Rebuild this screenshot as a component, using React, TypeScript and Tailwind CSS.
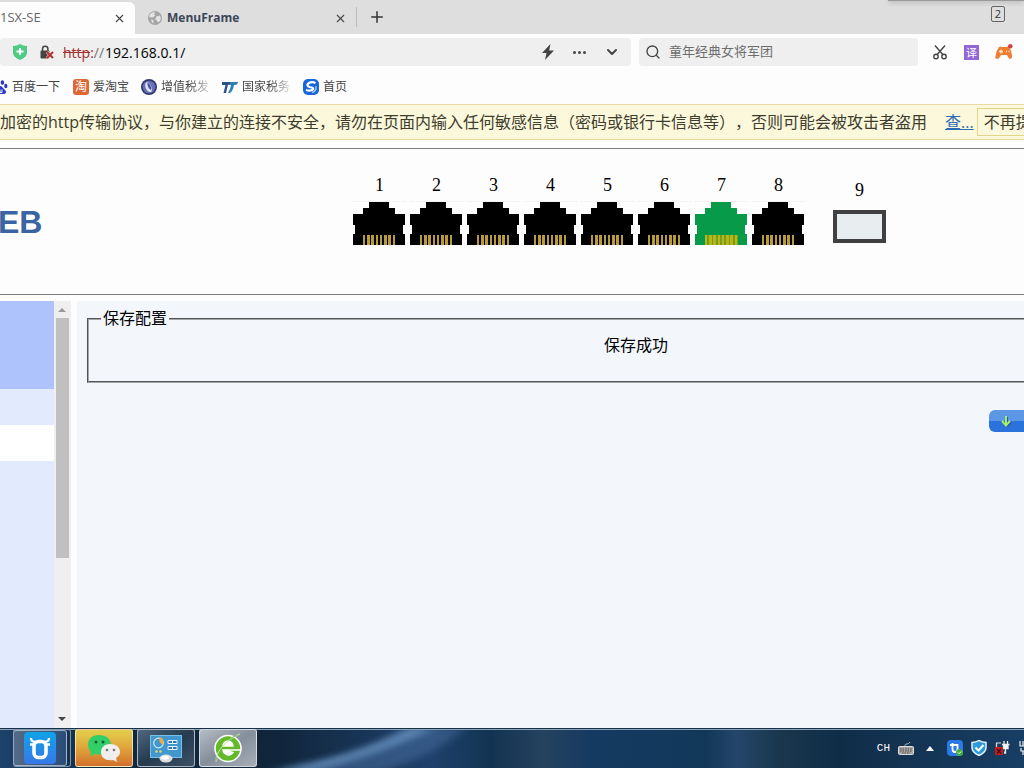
import React from 'react';
import { Scissors, Search, ChevronDown, Plus, X } from 'lucide-react';

const uiFont   = "font-['Open_Sans','Noto_Sans_CJK_SC',sans-serif]";
const pageFont = "font-['Liberation_Serif','Noto_Sans_CJK_SC',serif]";

const PORTS = [
  { id: 1, up: false },
  { id: 2, up: false },
  { id: 3, up: false },
  { id: 4, up: false },
  { id: 5, up: false },
  { id: 6, up: false },
  { id: 7, up: true },
  { id: 8, up: false },
];

// [x, width] of each contact
const PINS = [[10, 2], [14, 3], [18, 3], [23, 2], [27, 2], [31, 3], [35, 3], [40, 2]];

/* ---------- icons ---------- */

const GlobeIcon = () => (
  <svg className="w-[14px] h-[14px] shrink-0" viewBox="0 0 14 14">
    <circle cx="7" cy="7" r="7" fill="#a5a5a5" />
    <path d="M2 3.2 4.5 1.2 7.2 1.6 6.2 3.4 7.4 4.6 5.2 6.2 3 6.4 1 5.4zM8.5 5.4 11.6 4.6 12.8 6.4 12.4 9.4 10.2 11.6 8.6 9.4 7.2 8.4zM3 8.4 5.6 9.2 5.4 12.4 3.8 11z" fill="#e2e2e2" />
  </svg>
);

const ShieldPlus = () => (
  <svg className="w-[14px] h-[16px] shrink-0" viewBox="0 0 14 16">
    <path d="M0 2Q4 2 7 0q3 2 7 2v7q0 4-7 7Q0 13 0 9z" fill="#4fcb83" />
    <path d="M7 4v7M3.500 7.500h7" stroke="#fff" strokeWidth="2" />
  </svg>
);

const LockBroken = () => (
  <svg className="w-[14px] h-[14px] shrink-0" viewBox="0 0 14 14">
    <path d="M2.500 6V4a2.700 2.700 0 0 1 5.400 0v2" fill="none" stroke="#444" strokeWidth="1.500" />
    <rect x="0.500" y="5.500" width="9" height="8" rx="1" fill="#444" />
    <path d="m7 7 6 6m0-6-6 6" stroke="#efefef" strokeWidth="3" />
    <path d="m7 7 6 6m0-6-6 6" stroke="#b5302c" strokeWidth="2" />
  </svg>
);

const BoltIcon = () => (
  <svg className="w-[14px] h-[16px]" viewBox="0 0 14 16">
    <path d="M9.500 0 1 9h4.500L4 16l9-9.500H8.200z" fill="#444" />
  </svg>
);

const GamepadIcon = () => (
  <svg className="w-[18px] h-[16px]" viewBox="0 0 18 16">
    <path d="M4 3q2-1 3 0h4q2-1 3 0 3 4 3 9 0 3-2 3-1 0-3-4H6q-2 4-4 4t-1.500-3Q1 7 4 3z" fill="#ef7d33" />
    <path d="M6 5.500v4M4 7.500h4M11 7.500h1M13.500 7.500h1" stroke="#ffe9c9" strokeWidth="1.300" />
    <circle cx="15.300" cy="2.300" r="2.300" fill="#db4046" />
  </svg>
);

const PawIcon = () => (
  <svg className="w-[8px] h-[16px] shrink-0" viewBox="8 0 8 16" fill="#2a35c9">
    <ellipse cx="10.400" cy="3.600" rx="1.700" ry="2.300" />
    <ellipse cx="13.800" cy="7" rx="1.600" ry="2.200" />
    <path d="M8 7q2 0 3 2l2.500 2.500q1.500 3-1.500 3.500H8z" />
    <path d="M8 10.500v3h2v-3" stroke="#fff" strokeWidth="1" fill="none" />
  </svg>
);

const TaoIcon = () => (
  <span className="flex w-[16px] h-[16px] shrink-0 items-center justify-center rounded-[3px] bg-[#de6736] text-[12px] leading-[14px] text-white">
    淘
  </span>
);

const TaxBallIcon = () => (
  <svg className="w-[16px] h-[16px] shrink-0" viewBox="0 0 16 16">
    <circle cx="8" cy="8" r="8" fill="#30386f" />
    <circle cx="8" cy="8" r="6.300" fill="#6871b4" />
    <ellipse cx="7.500" cy="8" rx="2.800" ry="5.200" fill="#dfe3f6" transform="rotate(-25 8 8)" />
    <ellipse cx="8.600" cy="7.600" rx="1.300" ry="3.600" fill="#4b559c" transform="rotate(-25 8 8)" />
  </svg>
);

const TaxIcon = () => (
  <svg className="w-[16px] h-[12px] shrink-0" viewBox="0 0 16 12">
    <path d="M0 1h9L8 3.800H6L4 12H1.500l2-8H0z" fill="#2c4f8c" />
    <path d="M8.500 1H16q-.5 3-3 3h-1q-1 6-4 8H6q2.500-4 3-8H7.500z" fill="#2c7fb4" />
  </svg>
);

const SogouIcon = () => (
  <svg className="w-[16px] h-[16px] shrink-0" viewBox="0 0 16 16">
    <rect width="16" height="16" rx="5" fill="#1867d8" />
    <path d="M12.500 4Q9 2.300 6 4T5.500 7.500q1 .8 3 1t1.500 1.800Q8 12.500 3 11" fill="none" stroke="#fff" strokeWidth="2.200" />
    <path d="M13 7q.8 5-4 6.500" fill="none" stroke="#9cc6f7" strokeWidth="1.400" />
  </svg>
);

const PortJack = ({ up }: { up: boolean }) => (
  <svg className="w-[53px] h-[44px]" viewBox="0 0 53 44" shapeRendering="crispEdges">
    <path d="M0 0.500h53" stroke="#efefef" strokeDasharray="2 1" />
    <path d="M16 1h20v6h6v6h10v11h-2v9h2v11H0V33h2v-9H0V13h10V7h6z" fill={up ? '#079a48' : '#000'} />
    {up && <rect x="10" y="34" width="33" height="10" fill="#7d9a14" />}
    {PINS.map(([x, w]) => (
      <rect key={x} x={x} y="34" width={w} height="10" fill={up ? '#b3b81d' : '#b99b3d'} />
    ))}
  </svg>
);

/* ---------- browser chrome ---------- */

const TabStrip = () => (
  <div className="relative flex h-[34px] shrink-0 items-end bg-[#dedede]">
    <div className="flex h-[32px] w-[135px] items-center justify-between rounded-tr-md bg-[#fdfdfd] pr-[9px]">
      <span className="text-[13px] text-[#666]">1SX-SE</span>
      <button type="button" aria-label="Close tab"><X size={13} color="#444" strokeWidth={2} /></button>
    </div>
    <div className="flex h-[32px] w-[221px] items-center pl-[13px] pr-[9px]">
      <GlobeIcon />
      <span className="ml-[5px] flex-1 text-[12px] font-bold text-[#3c4658]">MenuFrame</span>
      <button type="button" aria-label="Close tab"><X size={13} color="#444" strokeWidth={2} /></button>
    </div>
    <div className="mb-[7px] h-[20px] w-px bg-[#bdbdbd]" />
    <button type="button" aria-label="New tab" className="mb-[8px] ml-[11px]"><Plus size={18} color="#333" strokeWidth={2} /></button>
    <button type="button" className="mb-[12px] ml-auto mr-[19px] h-[16px] w-[14px] rounded-[2px] border border-[#666] text-[11px] leading-[14px] text-[#333]">2</button>
    {/* edge of a window hanging over the strip */}
    <div className="absolute right-0 top-0 h-px w-[136px] bg-[#999] shadow-[0_1px_4px_#777]" />
  </div>
);

const AddressBar = () => (
  <div className="flex h-[36px] shrink-0 items-center bg-[#fdfdfd]">
    <div className="flex h-[28px] w-[631px] shrink-0 items-center rounded-[4px] bg-[#efefef] pl-[13px] pr-[11px]">
      <ShieldPlus />
      <span className="ml-[13px] flex"><LockBroken /></span>
      <label htmlFor="url" className="ml-[9px] text-[14px] text-[#777]">
        <span className="text-[#a3302c] line-through">http</span>
        <span className="text-[#a3302c]">:</span>//
      </label>
      <input id="url" type="text" defaultValue="192.168.0.1/" className="ml-[1px] min-w-0 flex-1 bg-transparent text-[14px] text-black outline-none" />
      <div className="flex items-center gap-[18px]">
        <button type="button" aria-label="Speed mode"><BoltIcon /></button>
        <button type="button" aria-label="More" className="flex gap-[2px]">
          <i className="h-[3px] w-[3px] rounded-full bg-[#444]" />
          <i className="h-[3px] w-[3px] rounded-full bg-[#444]" />
          <i className="h-[3px] w-[3px] rounded-full bg-[#444]" />
        </button>
        <button type="button" aria-label="History"><ChevronDown size={16} color="#444" strokeWidth={3} /></button>
      </div>
    </div>
    <div className="ml-[8px] flex h-[28px] flex-1 items-center rounded-[4px] bg-[#efefef] pl-[6px]">
      <Search size={16} color="#444" strokeWidth={2} />
      <input aria-label="搜索" type="text" placeholder="童年经典女将军团" className="ml-[8px] min-w-0 flex-1 bg-transparent text-[13px] outline-none placeholder:text-[#6d6d6d]" />
    </div>
    <div className="flex items-center gap-[16px] pl-[14px] pr-[11px]">
      <button type="button" aria-label="Screenshot">
        <svg className="h-[16px] w-[16px]" viewBox="0 0 16 16" fill="none" stroke="#444" strokeWidth="1.400">
          <path d="M3 1.500 10.800 10.500M13 1.500 5.200 10.500" />
          <circle cx="4" cy="12.500" r="2.200" />
          <circle cx="12" cy="12.500" r="2.200" />
        </svg>
      </button>
      <button type="button" className="h-[15px] w-[15px] bg-[#9068d6] text-[11px] leading-[15px] text-white">译</button>
      <button type="button" aria-label="Games"><GamepadIcon /></button>
    </div>
  </div>
);

const bookmark = "flex items-center gap-[4px] text-[12px] text-[#444]";
const fadeText = "w-[48px] overflow-hidden whitespace-nowrap bg-linear-to-r from-[#444] from-60% to-[#ddd] bg-clip-text text-transparent";

const Bookmarks = () => (
  <nav className="flex h-[34px] shrink-0 items-center bg-[#fdfdfd]">
    <a href="#baidu" className={bookmark}><PawIcon />百度一下</a>
    <a href="#taobao" className={`${bookmark} ml-[13px]`}><TaoIcon />爱淘宝</a>
    <a href="#vat" className={`${bookmark} ml-[12px]`}><TaxBallIcon /><span className={fadeText}>增值税发</span></a>
    <a href="#tax" className={`${bookmark} ml-[13px]`}><TaxIcon /><span className={fadeText}>国家税务</span></a>
    <a href="#home" className={`${bookmark} ml-[13px]`}><SogouIcon />首页</a>
  </nav>
);

const InsecureNotice = () => (
  <div className="flex h-[36px] shrink-0 items-center overflow-hidden whitespace-nowrap border-y border-[#ead9a4] bg-[#fcf8dc] text-[16px] text-[#3d3d2e]">
    <span className="shrink-0 [text-spacing-trim:space-all]">
      加密的http传输协议，与你建立的连接不安全，请勿在页面内输入任何敏感信息（密码或银行卡信息等），否则可能会被攻击者盗用
    </span>
    <a href="#detail" className="ml-[18px] shrink-0 text-[#2d6cb5] underline">查...</a>
    <button type="button" className="ml-[3px] h-[28px] shrink-0 border border-[#e3d48c] px-[6px] leading-[26px]">不再提示</button>
  </div>
);

/* ---------- switch admin page ---------- */

const DeviceHeader = () => (
  <header className={`mt-[8px] flex h-[147px] shrink-0 border-y border-[#7c7c7c] ${pageFont}`}>
    <h1 className="-ml-[2px] w-[355px] shrink-0 pt-[55px] font-['Liberation_Sans',sans-serif] text-[32px] leading-[36px] font-bold text-[#3a64a2]">EB</h1>
    <div className="flex gap-[4px] pt-[24px]">
      {PORTS.map(p => (
        <div key={p.id} className="flex flex-col items-center gap-[4px]">
          <span className="text-[18px] leading-[24px]">{p.id}</span>
          <PortJack up={p.up} />
        </div>
      ))}
    </div>
    <div className="ml-[28px] flex flex-col items-center gap-[8px] pt-[29px]">
      <span className="text-[18px] leading-[24px]">9</span>
      <div className="h-[33px] w-[53px] border-4 border-[#403f41] bg-[#e8edf0]" />
    </div>
  </header>
);

const SideMenu = () => (
  <aside className="flex w-[71px] shrink-0">
    <div className="flex w-[54px] flex-col bg-[#e1ebfd]">
      <div className="h-[88px] bg-[#aec3fb]" />
      <div className="h-[36px]" />
      <div className="h-[36px] bg-white" />
    </div>
    <div className="flex flex-1 flex-col items-center bg-[#efefef] pr-[1px]">
      <svg className="h-[17px] w-[8px]" viewBox="0 0 8 17"><path d="M0 11h8L4 7z" fill="#999" /></svg>
      <div className="h-[240px] w-[13px] bg-[#c0c0c0]" />
      <svg className="mt-auto h-[17px] w-[8px]" viewBox="0 0 8 17"><path d="M0 6h8L4 10z" fill="#444" /></svg>
    </div>
  </aside>
);

const SavePanel = () => (
  <main className={`min-w-0 flex-1 overflow-hidden bg-[#f3f6fb] pl-[10px] pt-[6px] text-[16px] leading-[24px] text-black ${pageFont}`}>
    <fieldset className="h-[76px] w-[1098px] border-2 border-[#a4a6a8] px-[12px] [border-style:groove]">
      <legend className="px-[2px]">保存配置</legend>
      <p className="pt-[3px] text-center">保存成功</p>
    </fieldset>
    <div className="flex w-[1098px] pl-[902px] pt-[27px]">
      <button type="button" aria-label="保存配置" className="flex h-[22px] w-[90px] items-center rounded-[6px] bg-linear-to-b from-[#5c97e6] from-50% to-[#2c72dc] to-50% pl-[11px]">
        <svg className="h-[12px] w-[12px]" viewBox="0 0 12 12">
          <path d="M6 1v9M2 6l4 4.500L10 6" fill="none" stroke="#255a9c" strokeWidth="2" transform="translate(1 1)" />
          <path d="M6 1v9M2 6l4 4.500L10 6" fill="none" stroke="#a2f06c" strokeWidth="2" />
        </svg>
      </button>
    </div>
  </main>
);

/* ---------- taskbar ---------- */

const Aurora = () => (
  <svg className="absolute inset-0 h-full w-full" viewBox="0 0 1024 40" preserveAspectRatio="none">
    <defs>
      <linearGradient id="bar">
        <stop offset="0" stopColor="#1d426b" />
        <stop offset=".1" stopColor="#102a42" />
        <stop offset=".27" stopColor="#10253a" />
        <stop offset=".42" stopColor="#1f416c" />
        <stop offset=".48" stopColor="#123452" />
        <stop offset=".53" stopColor="#26425e" />
        <stop offset=".58" stopColor="#143a62" />
        <stop offset=".69" stopColor="#123859" />
        <stop offset=".72" stopColor="#24466a" />
        <stop offset=".76" stopColor="#1a374d" />
        <stop offset=".82" stopColor="#102d48" />
        <stop offset="1" stopColor="#183e64" />
      </linearGradient>
      <filter id="soft" x="-20%" y="-50%" width="140%" height="200%"><feGaussianBlur stdDeviation="6 3" /></filter>
    </defs>
    <rect width="1024" height="40" fill="url(#bar)" />
    <path d="M280 44Q360 32 405 0h60Q430 30 380 44z" fill="#3d6291" opacity=".7" filter="url(#soft)" />
    <path d="M270 42Q350 30 410 0h25Q370 30 310 44z" fill="#6c96c4" opacity=".75" filter="url(#soft)" />
    <path d="M0 .5h1024" stroke="#16304a" />
    <path d="M0 1.500h1024" stroke="#8aa4b8" />
  </svg>
);

const taskBtn = "flex h-[38px] w-[58px] items-center justify-center rounded-[3px] border border-white/60";

const Taskbar = () => (
  <footer className="relative h-[40px] shrink-0 overflow-hidden bg-[#14324f]">
    <Aurora />
    <div className="relative flex h-full items-center">
      <div className="flex gap-[4px] pl-[13px]">
        <div className="flex rounded-[3px] border border-[#8297b0] border-l-0">
          <button type="button" aria-label="Assistant" className="flex h-[36px] w-[54px] items-center justify-center rounded-[3px] border border-white/50 bg-linear-to-r from-[#536b86] to-[#2a4d7a]">
            <svg className="h-[32px] w-[32px]" viewBox="0 0 32 32">
              <defs><linearGradient id="ox" x2="0" y2="1"><stop stopColor="#10a3e8" /><stop offset="1" stopColor="#3777e8" /></linearGradient></defs>
              <rect width="32" height="32" rx="4" fill="url(#ox)" />
              <path d="M7 6q0 4 4 3.500M25 6q0 4-4 3.500" fill="none" stroke="#fff" strokeWidth="2.200" />
              <path d="M6 12.500h4M22 12.500h4" stroke="#fff" strokeWidth="2.500" />
              <rect x="10" y="9.500" width="12" height="16" rx="4.500" fill="none" stroke="#fff" strokeWidth="3.600" />
            </svg>
          </button>
          <span className="w-[3px]" />
        </div>
        <button type="button" aria-label="WeChat" className={`${taskBtn} bg-linear-to-b from-[#e3cf4c] via-[#e0a43c] to-[#d2702c]`}>
          <svg className="h-[28px] w-[34px]" viewBox="0 0 34 28">
            <path d="M12 1C5 1 1 5 1 11q0 4 3 7l-1 4 5-2q16 3 16-9C24 5 19 1 12 1z" fill="#32cf68" />
            <circle cx="9" cy="8" r="1.500" fill="#1d5a35" /><circle cx="16" cy="8" r="1.500" fill="#1d5a35" />
            <path d="M23 10c-6 0-9 4-9 8 0 6 5 9 12 8l4 2-1-4c3-2 4-4 4-6 0-5-4-8-10-8z" fill="#f0efee" />
            <circle cx="20" cy="16" r="1.300" fill="#777" /><circle cx="27" cy="16" r="1.300" fill="#777" />
          </svg>
        </button>
        <button type="button" aria-label="Control panel" className={`${taskBtn} bg-linear-to-br from-[#50677e] via-[#263b50] to-[#3d5166]`}>
          <svg className="h-[30px] w-[32px]" viewBox="0 0 32 30">
            <rect x=".5" y="2.500" width="31" height="22" fill="#4297cf" stroke="#79c1e8" />
            <circle cx="8.500" cy="10" r="4.800" fill="none" stroke="#cfe9f8" strokeWidth="1.200" />
            <path d="M9.500 9V4a5 5 0 0 1 3 8z" fill="#eeaa45" />
            <path d="M18 7.500h9v3h-9zM18 13.500h9v3h-9zM22.500 7v4M22.500 13v4" fill="#3079b4" stroke="#e3f4fd" />
            <circle cx="6.500" cy="18.500" r="1.300" fill="#d8dc68" /><circle cx="10.500" cy="18.500" r="1.300" fill="#d8dc68" />
            <ellipse cx="16" cy="25.500" rx="6.500" ry="4" fill="#dcdedf" />
            <ellipse cx="15" cy="24.500" rx="4" ry="2" fill="#fff" />
          </svg>
        </button>
        <button type="button" aria-label="Browser" className={`${taskBtn} bg-linear-to-br from-[#b5bcc4] via-[#848f9b] to-[#a7afb8]`}>
          <svg className="h-[30px] w-[30px]" viewBox="0 0 30 30">
            <circle cx="15" cy="15.500" r="13" fill="#63b928" stroke="#fff" strokeWidth="1.600" />
            <path d="M10 13a5 5 0 0 1 10 0zM10 17h18M10 17a5.500 5.500 0 0 0 10 2.500z" fill="#fff" stroke="#fff" strokeWidth="1.400" />
            <path d="M3 29q-1-7 6-15T27 1q-4 0-9 4T8 15 4 27z" fill="#4fa61f" stroke="#dff3cc" strokeWidth=".5" />
          </svg>
        </button>
      </div>

      <div className="ml-auto flex items-center text-white">
        <span className="text-[11px] leading-[16px] font-['Liberation_Mono',monospace]">CH</span>
        <svg className="ml-[8px] h-[15px] w-[16px]" viewBox="0 0 16 15">
          <path d="M7 5V4q0-1 2-1t3-2" fill="none" stroke="#aaa" />
          <rect x=".5" y="5.500" width="15" height="8" rx="1" fill="#aaa6a5" stroke="#ddd" />
          <path d="M2 8h12M2 10h12M4 12h8" stroke="#444" strokeDasharray="1.500 1" />
        </svg>
        <svg className="ml-[12px] h-[5px] w-[8px]" viewBox="0 0 8 5"><path d="M0 5h8L4 0z" fill="#fff" /></svg>
        <svg className="ml-[13px] h-[16px] w-[16px]" viewBox="0 0 16 16">
          <rect width="16" height="16" rx="4" fill="#2b79e8" />
          <path d="M3 5h3M5.500 3v6q0 3 2.500 3t2.500-3V5H6" fill="none" stroke="#fff" strokeWidth="1.800" />
          <circle cx="12.500" cy="12.500" r="3.500" fill="#45ae45" />
          <path d="m11 12.500 1.200 1.200 2-2.200" fill="none" stroke="#fff" />
        </svg>
        <svg className="ml-[8px] h-[16px] w-[16px]" viewBox="0 0 16 16">
          <path d="M1 2.500q4 0 7-2 3 2 7 2v5q0 5-7 8-7-3-7-8z" fill="#2d9adb" stroke="#e4f4fd" strokeWidth="1.500" />
          <path d="m4.500 7.500 3 3 5-5.500" fill="none" stroke="#fff" strokeWidth="2" />
        </svg>
        <svg className="ml-[8px] h-[16px] w-[15px]" viewBox="0 0 15 16">
          <path d="M1.500 8V3h4.500" fill="none" stroke="#ddd" strokeWidth="1.200" />
          <path d="M9 1v3M12.500 1v3M7 4.500h7.500M8.500 5h4.500v3.500h-4.500zM10.500 9v4H9" fill="#fff" stroke="#eee" strokeWidth="1.300" />
          <rect x="0" y="7" width="8" height="8" fill="#c21e20" />
          <path d="m2 9 4 4.500M6 9l-4 4.500" stroke="#4a090b" strokeWidth="1.500" />
        </svg>
        <svg className="ml-[9px] h-[16px] w-[5px]" viewBox="0 0 5 16">
          <path d="M1 1v5h4M4 1v5M2 8v3h3M4 11v4" fill="none" stroke="#eee" strokeWidth="1.200" />
        </svg>
      </div>
    </div>
  </footer>
);

const App = () => (
  <div className={`flex h-screen flex-col overflow-hidden bg-[#fdfdfd] ${uiFont}`}>
    <TabStrip />
    <AddressBar />
    <Bookmarks />
    <InsecureNotice />
    <DeviceHeader />
    <div className="mt-[6px] flex min-h-0 flex-1 gap-[6px]">
      <SideMenu />
      <SavePanel />
    </div>
    <Taskbar />
  </div>
);

export default App;
